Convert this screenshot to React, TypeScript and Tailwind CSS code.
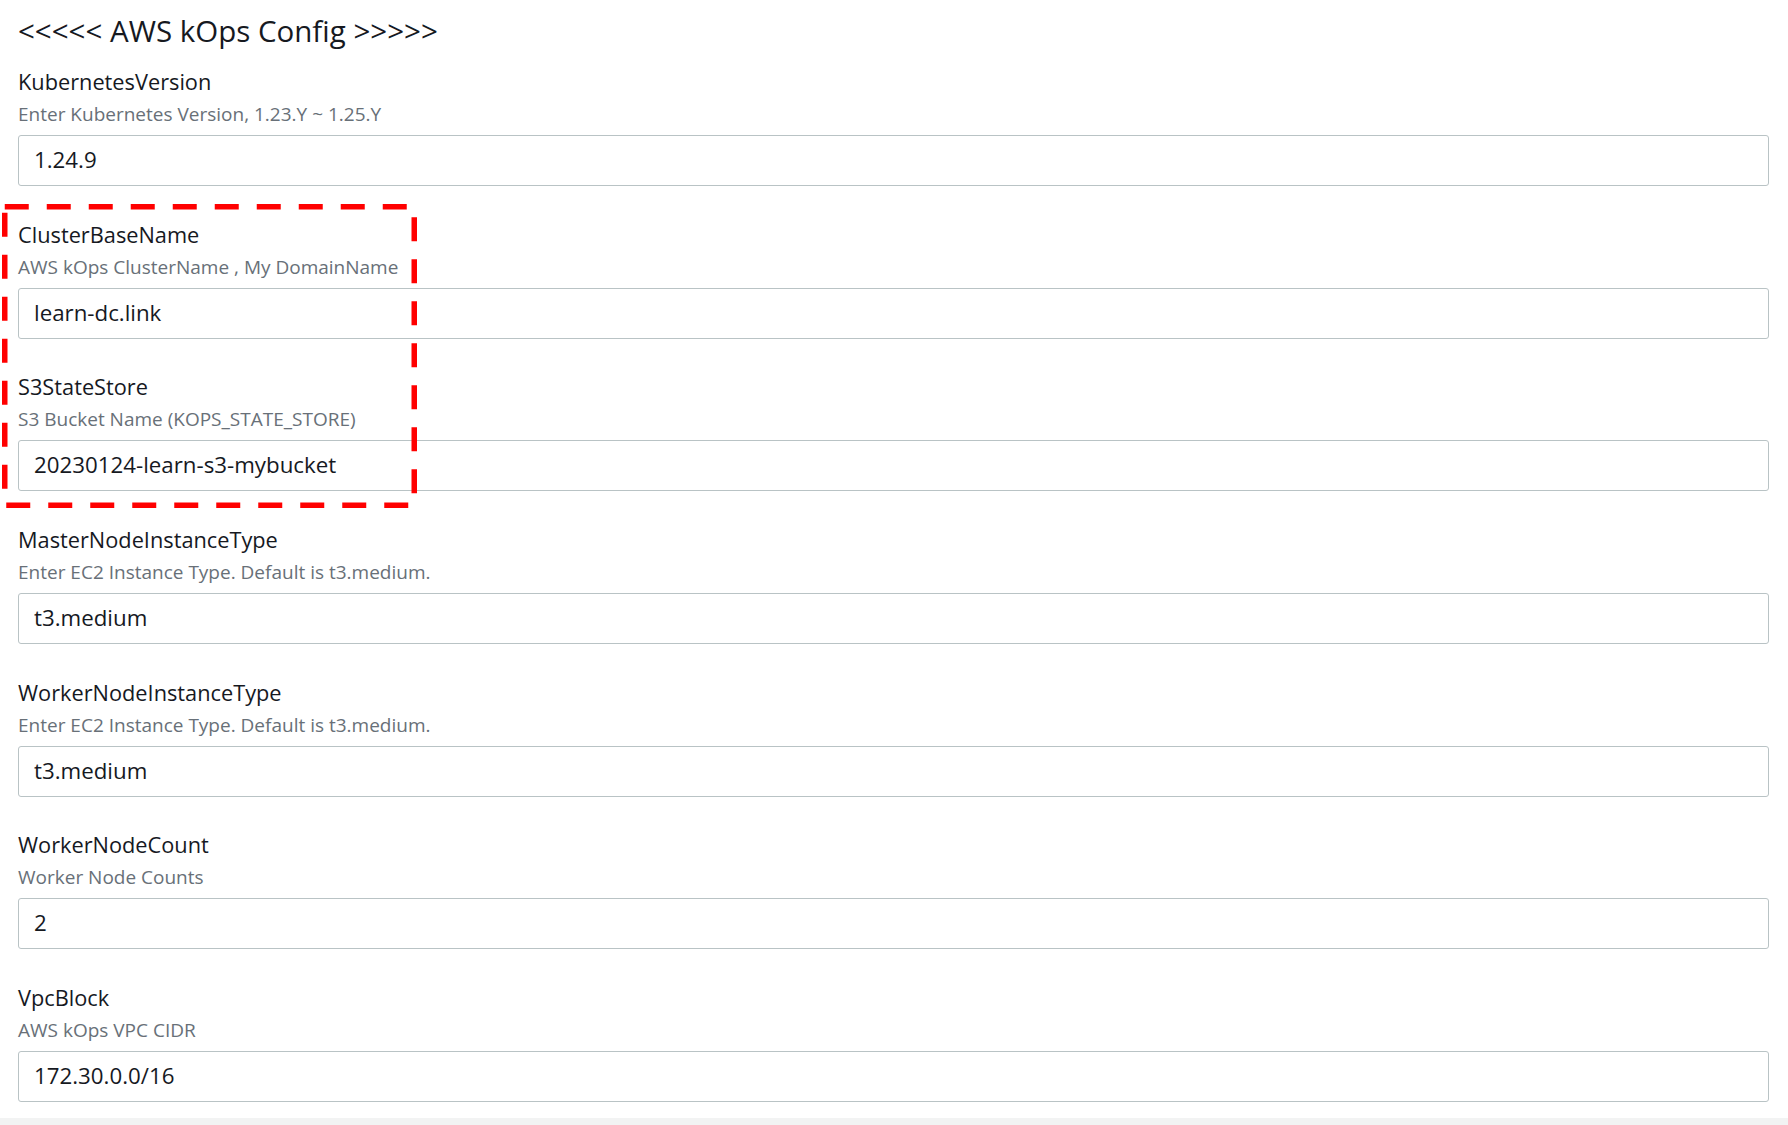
import React from "react";

type Field = { label: string; desc: string; value: string };

const fields: Field[] = [
  { label: "KubernetesVersion", desc: "Enter Kubernetes Version, 1.23.Y ~ 1.25.Y", value: "1.24.9" },
  { label: "ClusterBaseName", desc: "AWS kOps ClusterName , My DomainName", value: "learn-dc.link" },
  { label: "S3StateStore", desc: "S3 Bucket Name (KOPS_STATE_STORE)", value: "20230124-learn-s3-mybucket" },
  { label: "MasterNodeInstanceType", desc: "Enter EC2 Instance Type. Default is t3.medium.", value: "t3.medium" },
  { label: "WorkerNodeInstanceType", desc: "Enter EC2 Instance Type. Default is t3.medium.", value: "t3.medium" },
  { label: "WorkerNodeCount", desc: "Worker Node Counts", value: "2" },
  { label: "VpcBlock", desc: "AWS kOps VPC CIDR", value: "172.30.0.0/16" },
];

function FieldRow({ f }: { f: Field }) {
  return (
    <div className="flex flex-col">
      <label className="text-[21.75px] leading-[30px] text-[#16191f]">{f.label}</label>
      <div className="mt-[5px] text-[19px] leading-[24px] text-[#687078]">{f.desc}</div>
      <input
        readOnly
        value={f.value}
        className="mt-[9px] h-[51px] w-full rounded-[3px] border border-[#b9c3c5] bg-white pb-[2px] pl-[15px] text-[22.3px] text-[#16191f] outline-none"
        style={{ fontFamily: "'Open Sans', 'Noto Sans', sans-serif" }}
      />
    </div>
  );
}

export default function App() {
  return (
    <div
      className="relative flex h-[1125px] w-full flex-col overflow-hidden bg-white"
      style={{ fontFamily: "'Open Sans', 'Noto Sans', sans-serif" }}
    >
      <div className="pl-[18px] pr-[19px] pt-[11px]">
        <h1 className="text-[29.5px] leading-[40px] text-[#16191f]">{"<<<<< AWS kOps Config >>>>>"}</h1>
        <div className="mt-[16px] flex flex-col gap-[33.67px]">
          {fields.map((f) => (
            <FieldRow key={f.label} f={f} />
          ))}
        </div>
      </div>
      <div className="mt-[16px] flex-1 bg-[#f2f3f3]" />
      <svg
        className="pointer-events-none absolute left-[2px] top-[204px]"
        width="415"
        height="304"
        viewBox="0 0 415 304"
      >
        <rect
          x="2.75"
          y="2.75"
          width="409.5"
          height="298.5"
          fill="none"
          stroke="#ff0000"
          strokeWidth="5.5"
          strokeDasharray="24 18"
        />
      </svg>
    </div>
  );
}
